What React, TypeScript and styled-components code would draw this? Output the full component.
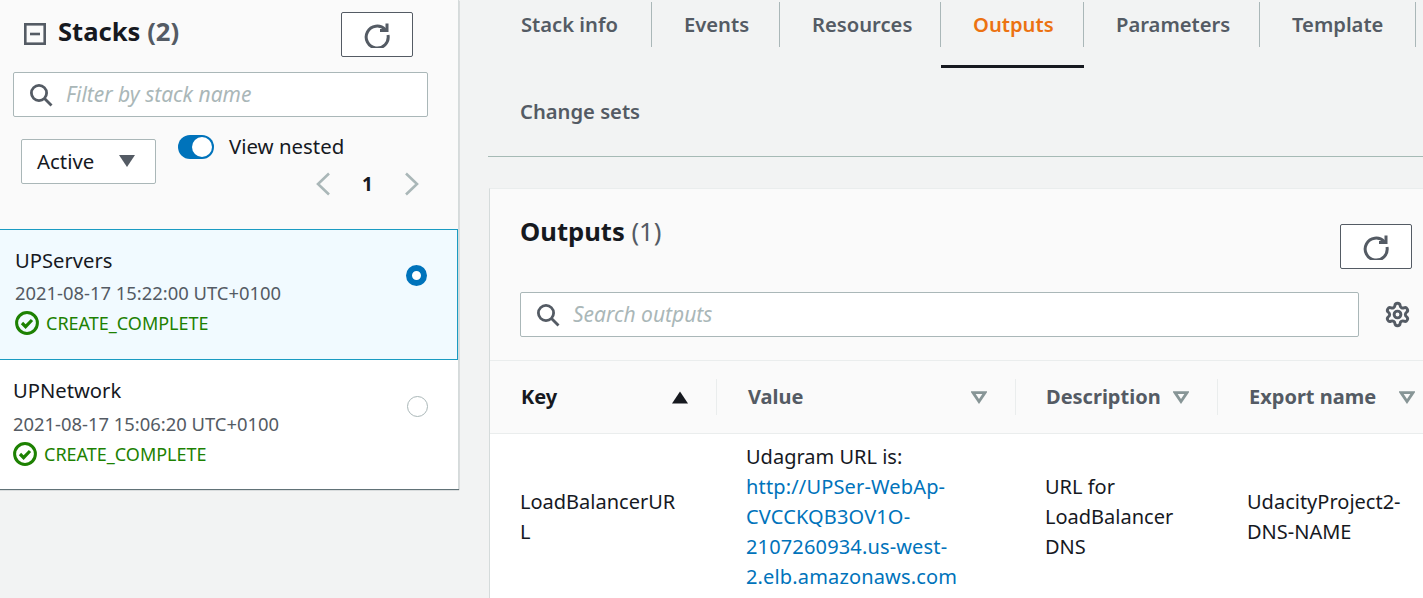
import React from 'react';
import styled, { createGlobalStyle } from 'styled-components';
import { Settings } from 'lucide-react';

const GlobalStyle = createGlobalStyle`
  html, body {
    margin: 0;
    padding: 0;
    background: #f2f3f3;
    font-family: "Noto Sans", "Open Sans", sans-serif;
    color: #16191f;
  }
  * { box-sizing: border-box; }
`;

const Page = styled.div`
  display: flex;
  width: 1423px;
  height: 598px;
  overflow: hidden;
`;

const Sidebar = styled.aside`
  flex: 0 0 459px;
  height: 489px;
  background: #fafafa;
  border-right: 1px solid #d5dbdb;
  box-shadow: 0 1px 1px rgba(0, 28, 36, 0.6);
`;

const SidebarTop = styled.div`
  height: 229px;
  padding-top: 12px;
`;

const SidebarHeader = styled.div`
  display: flex;
  align-items: flex-start;
  padding-left: 24px;
  height: 45px;
`;

const Title = styled.h2`
  margin: 0;
  font-size: 25.6px;
  line-height: 40px;
  font-weight: 700;
  white-space: nowrap;
`;

const Count = styled.span<{ $light?: boolean }>`
  color: #545b64;
  font-weight: ${(p) => (p.$light ? 400 : 700)};
`;

const CollapseIcon = styled.svg`
  width: 22px;
  height: 22px;
  margin: 11px 12px 0 0;
  color: #545b64;
`;

const RefreshButton = styled.button`
  display: flex;
  align-items: center;
  justify-content: center;
  width: 72px;
  height: 45px;
  padding: 0;
  background: #fff;
  border: 1px solid #545b64;
  border-radius: 2px;
  color: #545b64;
`;

const SidebarRefresh = styled(RefreshButton)`
  margin-left: 162px;
`;

const SearchBox = styled.div<{ $w: number }>`
  display: flex;
  align-items: center;
  width: ${(p) => p.$w}px;
  height: 45px;
  padding-left: 15px;
  background: #fff;
  border: 1px solid #aab7b8;
  border-radius: 2px;
  color: #545b64;
`;

const SidebarSearch = styled(SearchBox)`
  margin: 15px 0 0 13px;
`;

const SearchInput = styled.input`
  flex: 1;
  min-width: 0;
  margin: 0 0 2px 11px;
  border: 0;
  outline: 0;
  background: transparent;
  font: italic 400 21px "Noto Sans", sans-serif;
  &::placeholder {
    color: #aab7b8;
    opacity: 1;
  }
`;

const ControlRow = styled.div`
  display: flex;
  align-items: flex-start;
  padding: 22px 0 0 21px;
`;

const Select = styled.div`
  display: flex;
  align-items: center;
  justify-content: space-between;
  width: 135px;
  height: 45px;
  margin-right: 22px;
  padding: 0 20px 2px 15px;
  background: #fff;
  border: 1px solid #aab7b8;
  border-radius: 2px;
  font-size: 20.4px;
`;

const NestedColumn = styled.div`
  display: flex;
  flex-direction: column;
  margin-top: -4px;
`;

const ToggleRow = styled.div`
  display: flex;
  align-items: center;
  height: 24px;
  font-size: 20.4px;
  white-space: nowrap;
`;

const ToggleLabel = styled.span`
  margin-top: -2px;
`;

const Toggle = styled.span`
  display: flex;
  justify-content: flex-end;
  align-items: center;
  width: 36px;
  height: 24px;
  margin-right: 15px;
  padding-right: 2px;
  background: #0073bb;
  border-radius: 12px;
  &::after {
    content: '';
    width: 20px;
    height: 20px;
    border-radius: 50%;
    background: #fff;
  }
`;

const Pager = styled.div`
  display: flex;
  align-items: center;
  height: 24px;
  margin: 13px 0 0 138px;
  color: #aab7b8;
`;

const PageNumber = styled.span`
  width: 75px;
  text-align: center;
  color: #16191f;
  font-size: 19px;
  font-weight: 700;
`;

const StackRow = styled.div<{ $selected?: boolean }>`
  display: flex;
  justify-content: space-between;
  width: 458px;
  height: ${(p) => (p.$selected ? 131 : 129)}px;
  padding: ${(p) => (p.$selected ? '15px 30px 0 15px' : '15px 30px 0 13px')};
  background: ${(p) => (p.$selected ? '#f1faff' : '#fff')};
  border: ${(p) => (p.$selected ? '1px solid #1a9bc2' : '0')};
  border-left: 0;
`;

const StackName = styled.div`
  font-size: 20.2px;
  line-height: 30px;
`;

const StackDate = styled.div<{ $selected?: boolean }>`
  margin-top: ${(p) => (p.$selected ? 3 : 4)}px;
  font-size: 18.4px;
  line-height: 30px;
  color: #545b64;
`;

const Status = styled.div`
  display: flex;
  align-items: center;
  gap: 7px;
  font-size: 18px;
  line-height: 30px;
  color: #1d8102;
`;

const Radio = styled.span<{ $on?: boolean }>`
  flex: none;
  width: 21px;
  height: 21px;
  margin-top: ${(p) => (p.$on ? 20 : 21)}px;
  border-radius: 50%;
  background: #fff;
  border: ${(p) => (p.$on ? '6px solid #0073bb' : '1px solid #aab7b8')};
`;

const Main = styled.main`
  flex: 1;
  min-width: 0;
  padding-left: 29px;
`;

const TabStrip = styled.nav`
  display: flex;
  flex-wrap: wrap;
  align-content: flex-start;
  width: 935px;
  height: 157px;
  border-bottom: 1px solid #a6bab5;
`;

const Tab = styled.div<{ $w: number; $active?: boolean; $last?: boolean }>`
  width: ${(p) => p.$w}px;
  height: ${(p) => (p.$last ? 88 : 68)}px;
  padding-top: ${(p) => (p.$last ? 21 : 2)}px;
  border-bottom: 3px solid ${(p) => (p.$active ? '#16191f' : 'transparent')};
`;

const TabLabel = styled.div<{ $active?: boolean; $last?: boolean; $pad: number }>`
  height: 45px;
  padding-left: ${(p) => p.$pad}px;
  border-right: ${(p) => (p.$last ? '0' : '1px solid #aab7b8')};
  font-size: 20.2px;
  line-height: 45px;
  font-weight: 600;
  white-space: nowrap;
  color: ${(p) => (p.$active ? '#ec7211' : '#545b64')};
`;

const Panel = styled.section`
  width: 934px;
  height: 410px;
  margin: 31px 0 0 1px;
  background: #fafafa;
  border-left: 1px solid #d5dbdb;
  border-top: 1px solid #eaeded;
`;

const PanelHeader = styled.div`
  display: flex;
  justify-content: space-between;
  height: 103px;
  padding: 23px 11px 0 30px;
`;

const PanelRefresh = styled(RefreshButton)`
  margin-top: 12px;
`;

const SearchRow = styled.div`
  display: flex;
  align-items: flex-start;
  height: 69px;
  padding-left: 30px;
  border-bottom: 1px solid #eaeded;
`;

const GearButton = styled.span`
  display: flex;
  margin: 9px 0 0 25px;
  color: #545b64;
`;

const Table = styled.div`
  display: grid;
  grid-template-columns: 227px 299px 202px 206px;
`;

const HeadCell = styled.div<{ $active?: boolean }>`
  display: flex;
  align-items: center;
  height: 73px;
  border-bottom: 1px solid #eaeded;
  font-size: 20px;
  font-weight: 700;
  color: ${(p) => (p.$active ? '#16191f' : '#545b64')};
`;

const HeadInner = styled.div<{ $last?: boolean; $pad?: number }>`
  display: flex;
  align-items: center;
  justify-content: space-between;
  width: 100%;
  height: 36px;
  padding: 0 ${(p) => (p.$last ? '9px' : '28px')} 0 ${(p) => p.$pad ?? 30}px;
  border-right: ${(p) => (p.$last ? '0' : '1px solid #eaeded')};
  white-space: nowrap;
`;

const HeadLabel = styled.span`
  margin-top: -2px;
`;

const Cell = styled.div<{ $pad?: number }>`
  display: flex;
  align-items: center;
  height: 165px;
  padding-left: ${(p) => p.$pad ?? 29}px;
  background: #fff;
  font-size: 20px;
  line-height: 30px;
`;

const CellText = styled.div<{ $w: number }>`
  width: ${(p) => p.$w}px;
  overflow-wrap: anywhere;
`;

const ValueLink = styled.a`
  color: #0073bb;
  text-decoration: none;
  letter-spacing: 0.15px;
`;

const RefreshIcon = () => (
  <svg width="26" height="26" viewBox="0 0 26 26" fill="none" stroke="currentColor" strokeWidth="3">
    <path d="M21.2 7.5A11 11 0 1 0 24 13" />
    <path d="M23 1.5V8.5H16" strokeLinejoin="miter" />
  </svg>
);

const SearchIcon = () => (
  <svg width="24" height="24" viewBox="0 0 24 24" fill="none" stroke="currentColor" strokeWidth="2.8" style={{ flex: 'none' }}>
    <circle cx="10" cy="10" r="7.6" />
    <path d="M15.5 15.5L22.5 22.5" />
  </svg>
);

const StatusIcon = () => (
  <svg width="24" height="24" viewBox="0 0 24 24" fill="none" stroke="#1d8102" strokeWidth="3" style={{ flex: 'none' }}>
    <circle cx="12" cy="12" r="10.4" />
    <path d="M7 12l3.6 3.6L17 9" strokeWidth="3.2" />
  </svg>
);

const Chevron = ({ dir }: { dir: 'left' | 'right' }) => (
  <svg width="14" height="24" viewBox="0 0 14 24" fill="none" stroke="currentColor" strokeWidth="2.6">
    <path d={dir === 'left' ? 'M13 1.5L2 12l11 10.5' : 'M1 1.5L12 12 1 22.5'} />
  </svg>
);

const FilterCaret = () => (
  <svg width="16" height="13" viewBox="0 0 16 13" fill="none" stroke="#879596" strokeWidth="2.8" style={{ flex: 'none' }}>
    <path d="M2 1.6H14L8 10.5Z" />
  </svg>
);

const SortCaret = () => (
  <svg width="16" height="13" viewBox="0 0 16 13" fill="#16191f" style={{ flex: 'none' }}>
    <path d="M8 0.5L16 12.5H0Z" />
  </svg>
);

const stacks = [
  { name: 'UPServers', date: '2021-08-17 15:22:00 UTC+0100', selected: true },
  { name: 'UPNetwork', date: '2021-08-17 15:06:20 UTC+0100', selected: false },
];

const tabs = [
  { label: 'Stack info', w: 164, pad: 33 },
  { label: 'Events', w: 128, pad: 32 },
  { label: 'Resources', w: 161, pad: 32 },
  { label: 'Outputs', w: 143, pad: 32, active: true },
  { label: 'Parameters', w: 176, pad: 32 },
  { label: 'Template', w: 156, pad: 32 },
  { label: 'Change sets', w: 164, pad: 32, last: true },
];

const App = () => (
  <Page>
    <GlobalStyle />
    <Sidebar>
      <SidebarTop>
        <SidebarHeader>
          <CollapseIcon viewBox="0 0 22 22" fill="none" stroke="currentColor" strokeWidth="2.6">
            <rect x="1.3" y="1.3" width="19.4" height="19.4" />
            <path d="M6 11H16" />
          </CollapseIcon>
          <Title>
            Stacks <Count>(2)</Count>
          </Title>
          <SidebarRefresh aria-label="Refresh">
            <RefreshIcon />
          </SidebarRefresh>
        </SidebarHeader>
        <SidebarSearch $w={415}>
          <SearchIcon />
          <SearchInput placeholder="Filter by stack name" />
        </SidebarSearch>
        <ControlRow>
          <Select>
            Active
            <svg width="16" height="12" viewBox="0 0 16 12" fill="#545b64">
              <path d="M0 0H16L8 12Z" />
            </svg>
          </Select>
          <NestedColumn>
            <ToggleRow>
              <Toggle />
              <ToggleLabel>View nested</ToggleLabel>
            </ToggleRow>
            <Pager>
              <Chevron dir="left" />
              <PageNumber>1</PageNumber>
              <Chevron dir="right" />
            </Pager>
          </NestedColumn>
        </ControlRow>
      </SidebarTop>
      {stacks.map((stack) => (
        <StackRow key={stack.name} $selected={stack.selected}>
          <div>
            <StackName>{stack.name}</StackName>
            <StackDate $selected={stack.selected}>{stack.date}</StackDate>
            <Status>
              <StatusIcon />
              CREATE_COMPLETE
            </Status>
          </div>
          <Radio $on={stack.selected} />
        </StackRow>
      ))}
    </Sidebar>
    <Main>
      <TabStrip>
        {tabs.map((tab) => (
          <Tab key={tab.label} $w={tab.w} $active={tab.active} $last={tab.last}>
            <TabLabel $active={tab.active} $last={tab.last} $pad={tab.pad}>
              {tab.label}
            </TabLabel>
          </Tab>
        ))}
      </TabStrip>
      <Panel>
        <PanelHeader>
          <Title>
            Outputs <Count $light>(1)</Count>
          </Title>
          <PanelRefresh aria-label="Refresh">
            <RefreshIcon />
          </PanelRefresh>
        </PanelHeader>
        <SearchRow>
          <SearchBox $w={839}>
            <SearchIcon />
            <SearchInput placeholder="Search outputs" />
          </SearchBox>
          <GearButton>
            <Settings size={27} strokeWidth={2.6} />
          </GearButton>
        </SearchRow>
        <Table>
          <HeadCell $active>
            <HeadInner $pad={31}>
              <HeadLabel>Key</HeadLabel>
              <SortCaret />
            </HeadInner>
          </HeadCell>
          <HeadCell>
            <HeadInner $pad={31}>
              <HeadLabel>Value</HeadLabel>
              <FilterCaret />
            </HeadInner>
          </HeadCell>
          <HeadCell>
            <HeadInner>
              <HeadLabel>Description</HeadLabel>
              <FilterCaret />
            </HeadInner>
          </HeadCell>
          <HeadCell>
            <HeadInner $last $pad={31}>
              <HeadLabel>Export name</HeadLabel>
              <FilterCaret />
            </HeadInner>
          </HeadCell>
          <Cell $pad={30}>
            <CellText $w={160}>LoadBalancerURL</CellText>
          </Cell>
          <Cell>
            <CellText $w={225}>
              Udagram URL is:
              <br />
              <ValueLink href="#">http://UPSer-WebAp-CVCCKQB3OV1O-2107260934.us-west-2.elb.amazonaws.com</ValueLink>
            </CellText>
          </Cell>
          <Cell>
            <CellText $w={150}>URL for LoadBalancer DNS</CellText>
          </Cell>
          <Cell>
            <CellText $w={170}>UdacityProject2-DNS-NAME</CellText>
          </Cell>
        </Table>
      </Panel>
    </Main>
  </Page>
);

export default App;
